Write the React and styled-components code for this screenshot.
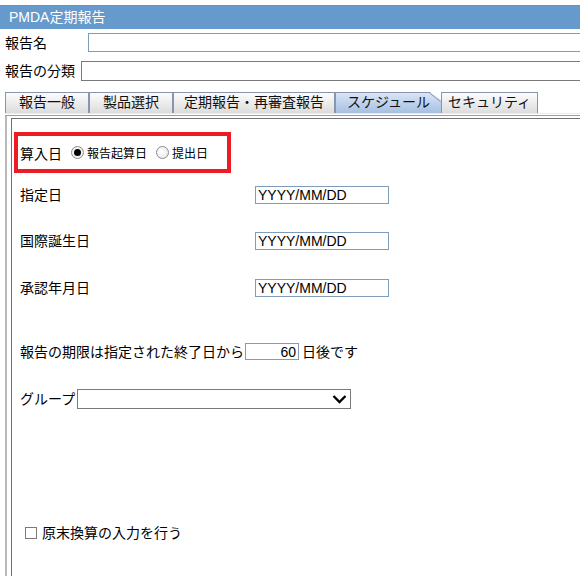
import React from "react";
import styled, { createGlobalStyle } from "styled-components";

const GlobalStyle = createGlobalStyle`
  html, body {
    margin: 0;
    padding: 0;
    background: #fff;
    overflow: hidden;
  }
  body {
    font-family: "Liberation Sans", "Noto Sans CJK JP", sans-serif;
    font-size: 14px;
    color: #000;
  }
`;

const Frame = styled.div`
  width: 100%;
  height: 576px;
  padding-top: 5px;
  box-sizing: border-box;
  display: flex;
  flex-direction: column;
`;

const TitleBar = styled.div`
  height: 23px;
  border-top: 1px solid #8a8a8a;
  background: #6699cc;
  color: #fff;
  padding-left: 9px;
  line-height: 23px;
  font-size: 14px;
`;

const FieldRow = styled.div`
  display: flex;
  align-items: center;
  margin-top: ${({ $top }) => $top}px;
  padding-left: 5px;
  height: ${({ $h }) => $h}px;
`;

const FieldLabel = styled.div`
  width: ${({ $w }) => $w}px;
  flex-shrink: 0;
  line-height: 16px;
`;

const TextBox = styled.input`
  flex: 1;
  min-width: 0;
  height: 100%;
  box-sizing: border-box;
  margin: 0;
  padding: 0 2px;
  border: 1px solid ${({ $blue }) => ($blue ? "#7f9db9" : "#7a7a7a")};
  border-right: none;
  font: inherit;
  outline: none;
  background: #fff;
`;

const TabStrip = styled.div`
  display: flex;
  margin-top: 11px;
  padding-left: 5px;
  height: 21px;
`;

const Tab = styled.div`
  position: relative;
  width: ${({ $w }) => $w}px;
  box-sizing: border-box;
  height: 21px;
  border: 1px solid #8796ae;
  border-bottom: none;
  border-right: ${({ $active }) => ($active ? "none" : "1px solid #8796ae")};
  background: ${({ $active }) =>
    $active
      ? "linear-gradient(#d9e5f6, #a6bfe2)"
      : "linear-gradient(#fcfcfc, #dcdcdc)"};
  clip-path: ${({ $active }) =>
    $active
      ? "polygon(0 0, calc(100% - 11px) 0, 100% 8px, 100% 100%, 0 100%)"
      : "none"};
  text-align: center;
  line-height: 19px;
  font-size: 14px;
  color: #111;
`;

const Fold = styled.svg`
  position: absolute;
  top: -1px;
  right: 0;
`;

const Panel = styled.div`
  flex: 1;
  margin-left: 5px;
  border-top: 1px solid #ecebd8;
  padding-top: 1px;
  display: flex;
  flex-direction: column;
`;

const PanelInner = styled.div`
  flex: 1;
  border-top: 1px solid #9c9c9c;
  border-left: 2px solid #b9b9b9;
  padding: 2px 0 0 4px;
  display: flex;
  flex-direction: column;
`;

const Content = styled.div`
  flex: 1;
  border-top: 1px solid #707070;
  border-left: 1px solid #707070;
  display: flex;
  flex-direction: column;
`;

const RedBox = styled.div`
  margin: 13px 0 0 2px;
  width: 217px;
  height: 41px;
  box-sizing: border-box;
  border: 4px solid #ed1c24;
  display: flex;
  align-items: center;
  padding-left: 2px;
`;

const BoxLabel = styled.span`
  font-size: 14px;
  margin-right: 9px;
`;

const RadioOption = styled.label`
  display: flex;
  align-items: center;
  margin-right: 9px;
  font-size: 12px;
`;

const Radio = styled.span`
  width: 13px;
  height: 13px;
  box-sizing: border-box;
  border-radius: 50%;
  border: 1px solid #8a8a8a;
  background: radial-gradient(circle at 40% 40%, #fff, #e6e6e6);
  display: flex;
  align-items: center;
  justify-content: center;
  margin-right: 3px;
  &::after {
    content: "";
    width: 7px;
    height: 7px;
    border-radius: 50%;
    background: ${({ $checked }) => ($checked ? "#000" : "transparent")};
  }
`;

const Row = styled.div`
  display: flex;
  align-items: center;
  margin-top: ${({ $top }) => $top}px;
  padding-left: ${({ $left }) => $left ?? 8}px;
  height: ${({ $h }) => $h}px;
`;

const RowLabel = styled.span`
  width: ${({ $w }) => ($w ? `${$w}px` : "auto")};
  flex-shrink: 0;
  white-space: nowrap;
  line-height: 16px;
`;

const DateBox = styled.input`
  width: 134px;
  height: 18px;
  box-sizing: border-box;
  margin: 0;
  padding: 0 2px;
  border: 1px solid #7f9db9;
  font: 14px "Liberation Sans", sans-serif;
  outline: none;
  color: #000;
`;

const DaysBox = styled.input`
  width: 54px;
  height: 17px;
  box-sizing: border-box;
  margin: 0 3px 0 1px;
  padding: 0 2px;
  border: 1px solid #7f9db9;
  font: 14px "Liberation Sans", sans-serif;
  text-align: right;
  outline: none;
`;

const SelectBox = styled.div`
  width: 274px;
  height: 20px;
  box-sizing: border-box;
  margin-left: 2px;
  border: 1px solid #7a7a7a;
  display: flex;
  align-items: center;
  justify-content: flex-end;
  padding-right: 3px;
  background: #fff;
`;

const CheckBox = styled.span`
  width: 12px;
  height: 12px;
  box-sizing: border-box;
  border: 1px solid #7a7a7a;
  background: #fff;
  margin-right: 5px;
`;

const dateRows = [
  { label: "指定日", top: 13 },
  { label: "国際誕生日", top: 28 },
  { label: "承認年月日", top: 29 },
];

const tabs = [
  { label: "報告一般", w: 84 },
  { label: "製品選択", w: 84 },
  { label: "定期報告・再審査報告", w: 162 },
  { label: "スケジュール", w: 106, active: true },
  { label: "セキュリティ", w: 97 },
];

export default function App() {
  return (
    <>
      <GlobalStyle />
      <Frame>
        <TitleBar>PMDA定期報告</TitleBar>

        <FieldRow $top={4} $h={19}>
          <FieldLabel $w={83}>報告名</FieldLabel>
          <TextBox $blue readOnly />
        </FieldRow>
        <FieldRow $top={9} $h={20}>
          <FieldLabel $w={76}>報告の分類</FieldLabel>
          <TextBox readOnly />
        </FieldRow>

        <TabStrip>
          {tabs.map((t) => (
            <Tab key={t.label} $w={t.w} $active={t.active}>
              {t.label}
              {t.active && (
                <Fold width="12" height="10" viewBox="0 0 12 10">
                  <line x1="0.5" y1="1" x2="11.5" y2="9.5" stroke="#8796ae" strokeWidth="1" />
                </Fold>
              )}
            </Tab>
          ))}
        </TabStrip>

        <Panel>
          <PanelInner>
            <Content>
              <RedBox>
                <BoxLabel>算入日</BoxLabel>
                <RadioOption>
                  <Radio $checked />
                  報告起算日
                </RadioOption>
                <RadioOption>
                  <Radio />
                  提出日
                </RadioOption>
              </RedBox>

              {dateRows.map((r) => (
                <Row key={r.label} $top={r.top} $h={18}>
                  <RowLabel $w={235}>{r.label}</RowLabel>
                  <DateBox defaultValue="YYYY/MM/DD" readOnly />
                </Row>
              ))}

              <Row $top={46} $h={17}>
                <RowLabel>報告の期限は指定された終了日から</RowLabel>
                <DaysBox defaultValue="60" readOnly />
                <RowLabel>日後です</RowLabel>
              </Row>

              <Row $top={29} $h={20}>
                <RowLabel>グループ</RowLabel>
                <SelectBox>
                  <svg width="15" height="10" viewBox="0 0 15 10">
                    <polyline
                      points="1.5,2 7.5,8 13.5,2"
                      fill="none"
                      stroke="#000"
                      strokeWidth="2.4"
                    />
                  </svg>
                </SelectBox>
              </Row>

              <Row $top={117} $h={14} $left={13}>
                <CheckBox />
                <RowLabel>原末換算の入力を行う</RowLabel>
              </Row>
            </Content>
          </PanelInner>
        </Panel>
      </Frame>
    </>
  );
}
